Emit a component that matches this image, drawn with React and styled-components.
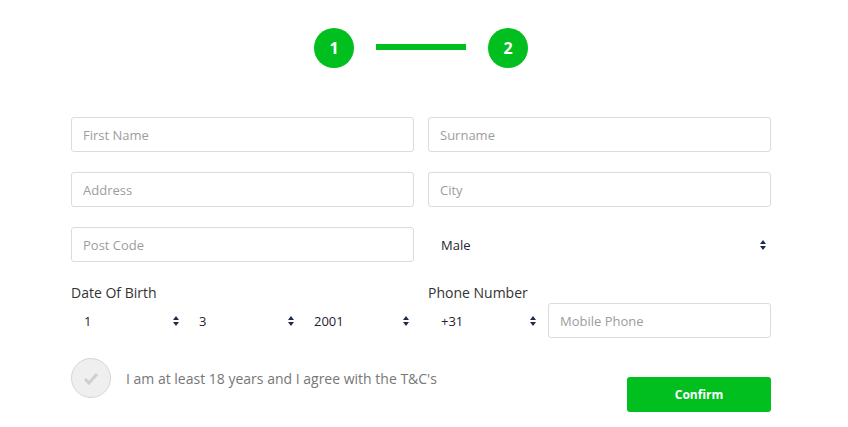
import React from 'react';
import styled, { createGlobalStyle } from 'styled-components';

const GlobalStyle = createGlobalStyle`
  body {
    margin: 0;
    background: #fff;
    font-family: "Open Sans", "Liberation Sans", sans-serif;
  }
`;

const Page = styled.div`
  display: flex;
  justify-content: center;
  padding: 28px 6px 0 0;
`;

const Wrapper = styled.div`
  width: 700px;
`;

const Steps = styled.div`
  display: flex;
  align-items: center;
  justify-content: center;
  gap: 22px;
  margin-bottom: 49px;
`;

const StepCircle = styled.div`
  width: 40px;
  height: 40px;
  border-radius: 50%;
  background: #00bf1f;
  color: #fff;
  font-weight: 700;
  font-size: 16px;
  display: flex;
  align-items: center;
  justify-content: center;
`;

const StepLine = styled.div`
  width: 90px;
  height: 6px;
  margin-top: -3px;
  background: #00bf1f;
`;

const Grid = styled.div`
  display: grid;
  grid-template-columns: 1fr 1fr;
  column-gap: 14px;
  row-gap: 20px;
`;

const Input = styled.input`
  box-sizing: border-box;
  width: 100%;
  height: 35px;
  padding: 0 11px;
  border: 1px solid #dcdcdc;
  border-radius: 3px;
  font-family: inherit;
  font-size: 13px;
  color: #333;
  outline: none;

  &::placeholder {
    color: #9d9d9d;
  }
`;

const SelectBox = styled.div`
  box-sizing: border-box;
  height: 35px;
  padding: 0 5px 0 13px;
  display: flex;
  align-items: center;
  justify-content: space-between;
  font-size: 13px;
  color: #1f2333;
`;

const Field = styled.div`
  display: flex;
  flex-direction: column;
`;

const Label = styled.div`
  font-size: 14px;
  color: #333;
  line-height: 20px;
  margin-top: 1px;
`;

const DateRow = styled.div`
  display: grid;
  grid-template-columns: repeat(3, 1fr);
  gap: 2px;
`;

const PhoneRow = styled.div`
  display: grid;
  grid-template-columns: 113px 1fr;
  gap: 7px;
`;

const Bottom = styled.div`
  display: flex;
  justify-content: space-between;
  align-items: flex-start;
  margin-top: 20px;
`;

const Agree = styled.label`
  display: flex;
  align-items: center;
  gap: 15px;
  font-size: 14px;
  color: #777;
`;

const CheckCircle = styled.div`
  box-sizing: border-box;
  width: 40px;
  height: 40px;
  border-radius: 50%;
  background: #efefef;
  border: 1px solid #d6d6d6;
  display: flex;
  align-items: center;
  justify-content: center;
`;

const ConfirmButton = styled.button`
  width: 144px;
  height: 35px;
  margin-top: 19px;
  border: none;
  border-radius: 3px;
  background: #00bf1f;
  color: #fff;
  font-family: inherit;
  font-weight: 700;
  font-size: 12px;
  cursor: pointer;
`;

const Arrows = () => (
  <svg width="6" height="10" viewBox="0 0 6 10">
    <path d="M3 0 L6 4 H0 Z M0 6 H6 L3 10 Z" fill="#1d2b4a" />
  </svg>
);

const Select = ({ value }) => (
  <SelectBox>
    <span>{value}</span>
    <Arrows />
  </SelectBox>
);

const App = () => (
  <>
    <GlobalStyle />
    <Page>
      <Wrapper>
        <Steps>
          <StepCircle>1</StepCircle>
          <StepLine />
          <StepCircle>2</StepCircle>
        </Steps>
        <Grid>
          <Input placeholder="First Name" />
          <Input placeholder="Surname" />
          <Input placeholder="Address" />
          <Input placeholder="City" />
          <Input placeholder="Post Code" />
          <Select value="Male" />
          <Field>
            <Label>Date Of Birth</Label>
            <DateRow>
              <Select value="1" />
              <Select value="3" />
              <Select value="2001" />
            </DateRow>
          </Field>
          <Field>
            <Label>Phone Number</Label>
            <PhoneRow>
              <Select value="+31" />
              <Input placeholder="Mobile Phone" />
            </PhoneRow>
          </Field>
        </Grid>
        <Bottom>
          <Agree>
            <CheckCircle>
              <svg width="16" height="13" viewBox="0 0 16 13">
                <path d="M2 7 L6 11 L14 2" fill="none" stroke="#cfcfcf" strokeWidth="3" />
              </svg>
            </CheckCircle>
            I am at least 18 years and I agree with the T&amp;C's
          </Agree>
          <ConfirmButton>Confirm</ConfirmButton>
        </Bottom>
      </Wrapper>
    </Page>
  </>
);

export default App;
